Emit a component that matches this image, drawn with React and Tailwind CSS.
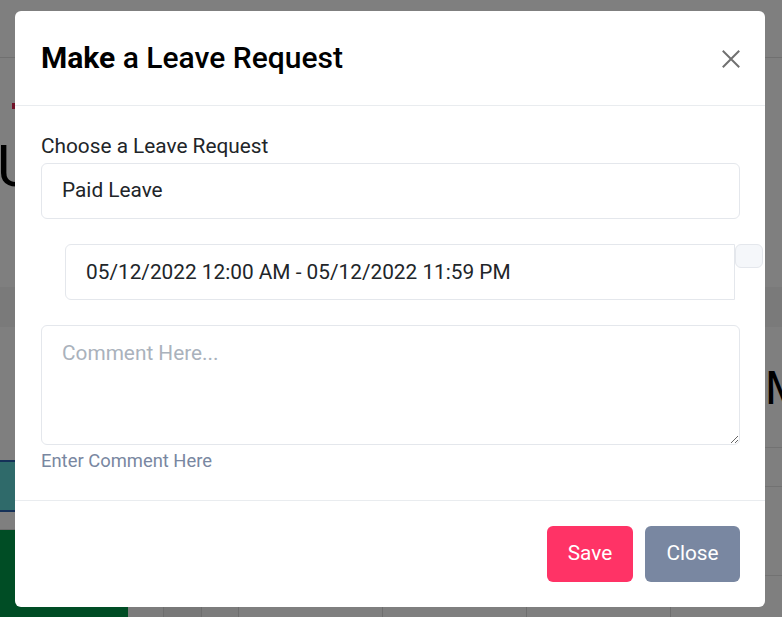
import { useState } from 'react';

const CloseIcon = () => (
    <svg width="18" height="18" viewBox="0 0 18 18" fill="none" stroke="currentColor" strokeWidth="2" strokeLinecap="square">
        <path d="M1.5 1.5 L16.5 16.5 M16.5 1.5 L1.5 16.5" />
    </svg>
);

const App = () => {
    const [leaveType, setLeaveType] = useState('paid');
    const [range, setRange] = useState('05/12/2022 12:00 AM - 05/12/2022 11:59 PM');
    const [comment, setComment] = useState('');

    return (
        <div className="relative h-[617px] w-full overflow-hidden bg-white font-['Roboto',sans-serif]">
            {/* Page behind the modal */}
            <div className="h-[58px] border-b border-[#e0e0e0]" />
            <div className="h-[229px] overflow-hidden pt-[45px]">
                <div className="ml-[12px] h-[6px] w-[3px] bg-[#e0224f]" />
                <div className="-ml-[3px] mt-[28px] whitespace-nowrap text-[58px] leading-[58px] text-black">Upcoming</div>
            </div>
            <div className="h-[40px] bg-[#f4f4f4]" />
            <div className="flex h-[290px]">
                <div className="flex w-[128px] shrink-0 flex-col">
                    <div className="h-[133px]" />
                    <div className="h-[52px] border-y-2 border-[#2a62b0] bg-[#5fd4d4]" />
                    <div className="h-[18px] border-b border-[#dddddd]" />
                    <div className="flex-1 bg-[#009a4b]" />
                </div>
                <div className="flex min-w-0 flex-1 flex-col overflow-hidden">
                    <div className="h-[120px] whitespace-nowrap pl-[637px] pt-[38px] text-[46px] leading-[46px] text-black">Monday</div>
                    <div className="h-[40px] border-y border-[#e4e4e4]" />
                    <div className="h-[88px]" />
                    <div className="flex flex-1 border-t border-[#e4e4e4]">
                        <div className="w-[36px] border-r border-[#dcdcdc] bg-[#f9f9f9]" />
                        <div className="w-[38px] border-r border-[#dcdcdc] bg-[#f0f0f0]" />
                        <div className="w-[37px] border-r border-[#dcdcdc] bg-[#f9f9f9]" />
                        <div className="w-[144px] border-r border-[#dcdcdc]" />
                        <div className="w-[144px] border-r border-[#dcdcdc]" />
                        <div className="w-[144px] border-r border-[#dcdcdc]" />
                        <div className="flex-1" />
                    </div>
                </div>
            </div>

            {/* Backdrop */}
            <div className="absolute inset-0 bg-black/50" />

            {/* Modal */}
            <div className="absolute left-[15px] top-[11px] w-[750px] rounded-[6px] bg-white text-[#212529]">
                <div className="flex items-center justify-between border-b border-[#e9ecef] pl-[26px] pr-[25px] py-[26px]">
                    <h5 className="text-[30px] leading-[42px] font-medium text-black">
                        <span className="font-bold">Make</span> a Leave Request
                    </h5>
                    <button type="button" className="mt-[2px] text-[#707070]">
                        <CloseIcon />
                    </button>
                </div>

                <div className="pl-[26px] pr-[25px] pt-[25px] pb-[26px]">
                    <label className="mb-[2px] block text-[20.8px] leading-[30px]">Choose a Leave Request</label>
                    <select
                        value={leaveType}
                        onChange={(e) => setLeaveType(e.target.value)}
                        className="block h-[56px] w-full appearance-none rounded-[6px] border border-[#e4e7ec] bg-white px-5 text-[20.8px] text-[#212529] outline-none"
                    >
                        <option value="paid">Paid Leave</option>
                        <option value="sick">Sick Leave</option>
                        <option value="unpaid">Unpaid Leave</option>
                    </select>

                    <div className="-mr-[23px] ml-6 mt-[25px] flex items-start">
                        <input
                            type="text"
                            value={range}
                            onChange={(e) => setRange(e.target.value)}
                            className="h-[56px] min-w-0 flex-1 rounded-l-[6px] border border-[#e4e7ec] px-5 text-[20.8px] text-[#212529] outline-none"
                        />
                        <div className="h-[24px] w-[28px] rounded-[6px] border border-[#e4e7ec] bg-[#f5f7fa]" />
                    </div>

                    <textarea
                        value={comment}
                        onChange={(e) => setComment(e.target.value)}
                        placeholder="Comment Here..."
                        className="mt-[25px] block h-[120px] w-full rounded-[6px] border border-[#e4e7ec] px-5 py-[12px] text-[20.8px] leading-[30px] outline-none placeholder:text-[#aab2bc]"
                    />
                    <div className="mt-[2px] text-[18.4px] leading-[27px] text-[#7987a1]">Enter Comment Here</div>
                </div>

                <div className="flex justify-end gap-3 border-t border-[#e9ecef] pl-[26px] pr-[25px] pt-[25px] pb-[25px]">
                    <button type="button" className="h-[56px] w-[86px] rounded-[6px] bg-[#ff3366] text-[20.8px] text-white">Save</button>
                    <button type="button" className="h-[56px] w-[95px] rounded-[6px] bg-[#7987a1] text-[20.8px] text-white">Close</button>
                </div>
            </div>
        </div>
    );
};

export default App;
